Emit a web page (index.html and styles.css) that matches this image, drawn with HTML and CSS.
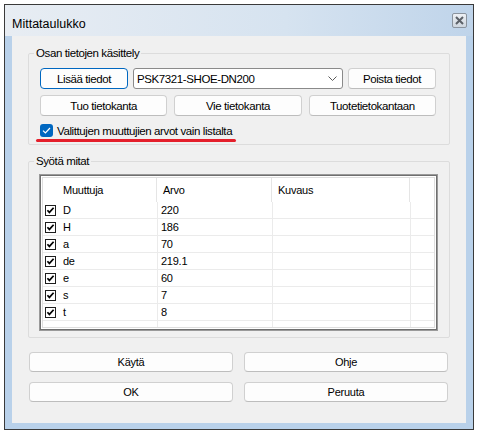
FILE: index.html
```html
<!DOCTYPE html>
<html lang="fi">
<head>
    <meta charset="UTF-8">
    <title>Mittataulukko</title>
    <link rel="stylesheet" href="styles.css">
</head>
<body>
    <div class="window">
        <div class="titlebar">
            <span class="title">Mittataulukko</span>
            <button class="close" aria-label="Sulje">
                <svg width="9" height="9" viewBox="0 0 9 9"><path d="M1 1 L8 8 M8 1 L1 8" stroke="#5c6168" stroke-width="2" fill="none"/></svg>
            </button>
        </div>
        <div class="frame">
            <div class="client">
                <fieldset class="group group-parts">
                    <legend>Osan tietojen käsittely</legend>
                    <div class="row-main">
                        <button class="btn btn-default">Lisää tiedot</button>
                        <div class="combo">
                            <span>PSK7321-SHOE-DN200</span>
                            <svg width="9" height="5" viewBox="0 0 9 5"><path d="M0.5 0.5 L4.5 4.5 L8.5 0.5" stroke="#5a5a5a" stroke-width="1" fill="none"/></svg>
                        </div>
                        <button class="btn">Poista tiedot</button>
                    </div>
                    <div class="row-db">
                        <button class="btn">Tuo tietokanta</button>
                        <button class="btn">Vie tietokanta</button>
                        <button class="btn">Tuotetietokantaan</button>
                    </div>
                    <label class="check">
                        <span class="check-box">
                            <svg width="9" height="7" viewBox="0 0 9 7"><path d="M1 3.6 L3.4 6 L8 1" stroke="#fff" stroke-width="1.2" fill="none"/></svg>
                        </span>
                        Valittujen muuttujien arvot vain listalta
                    </label>
                    <div class="mark"></div>
                </fieldset>

                <fieldset class="group group-values">
                    <legend>Syötä mitat</legend>
                    <div class="list">
                        <div class="list-inner">
                            <div class="list-head">
                                <span>Muuttuja</span>
                                <span>Arvo</span>
                                <span>Kuvaus</span>
                                <span></span>
                            </div>
                            <div id="rows"></div>
                        </div>
                    </div>
                </fieldset>

                <div class="actions">
                    <button class="btn btn-small">Käytä</button>
                    <button class="btn btn-small">Ohje</button>
                    <button class="btn btn-small">OK</button>
                    <button class="btn btn-small">Peruuta</button>
                </div>
            </div>
        </div>
    </div>

    <script>
        const values = [
            ['D', '220'],
            ['H', '186'],
            ['a', '70'],
            ['de', '219.1'],
            ['e', '60'],
            ['s', '7'],
            ['t', '8']
        ];

        const tick = '<svg width="11" height="11" viewBox="0 0 11 11">' +
            '<rect x="0.5" y="0.5" width="10" height="10" fill="#fff" stroke="#1e1e1e"/>' +
            '<path d="M2.4 5.2 L4.4 7.4 L8.6 2.8" stroke="#000" stroke-width="1.7" fill="none"/></svg>';

        const rows = document.getElementById('rows');
        values.forEach(([name, value]) => {
            const row = document.createElement('div');
            row.className = 'list-row';
            row.innerHTML = '<div class="var">' + tick + '<span>' + name + '</span></div>' +
                '<div>' + value + '</div><div></div><div></div>';
            rows.appendChild(row);
        });

        // tyhjä rivi listan lopussa
        const empty = document.createElement('div');
        empty.className = 'list-row';
        empty.innerHTML = '<div></div><div></div><div></div><div></div>';
        rows.appendChild(empty);
    </script>
</body>
</html>
```

FILE: styles.css
```css
body {
    margin: 0;
    background-color: #fff;
    font-family: "Liberation Sans", Arial, sans-serif;
    color: #000;
}

.window {
    box-sizing: border-box;
    width: 470px;
    height: 426px;
    margin: 4px 0 0 4px;
    border: 1px solid #3a3a3a;
    background-color: #b9d1ea;
    display: flex;
    flex-direction: column;
    box-shadow: 0 1px 0 #8cc8e6;
}

.titlebar {
    box-sizing: border-box;
    flex: none;
    height: 31px;
    padding: 8px 6px 0 7px;
    display: flex;
    justify-content: space-between;
    align-items: flex-start;
    background: linear-gradient(to right, #e8edf3, #d6e3f0 60%, #bfd4ea);
}

.title {
    margin-top: 4px;
    font-size: 12.5px;
    line-height: 15px;
}

.close {
    box-sizing: border-box;
    width: 15px;
    height: 15px;
    padding: 0;
    border: 1px solid #8b949e;
    border-radius: 2px;
    background: linear-gradient(#edf0f4, #cfd7e0);
    display: flex;
    align-items: center;
    justify-content: center;
}

.frame {
    flex: 1;
    padding: 0 7px 6px;
    display: flex;
}

.client {
    box-sizing: border-box;
    flex: 1;
    padding: 10px 16px 0;
    background-color: #f0f0f0;
}

/* ryhmäkehykset */
.group {
    margin: 0;
    min-width: 0;
    border: 1px solid #dcdcdc;
    border-radius: 2px;
}

.group legend {
    padding: 0 2px;
    font-size: 11.5px;
    line-height: 14px;
    letter-spacing: -0.4px;
}

.group-parts {
    padding: 8px 13px 2px 11px;
}

.group-parts legend {
    margin-left: -6px;
}

.group-values {
    margin-top: 9px;
    padding: 6px 11px 6px 10px;
}

.group-values legend {
    margin-left: -5px;
}

/* painikkeet */
.btn {
    box-sizing: border-box;
    height: 21px;
    padding: 0;
    border: 1px solid #d0d0d0;
    border-bottom-color: #bdbdbd;
    border-radius: 4px;
    background-color: #fdfdfd;
    font-family: inherit;
    font-size: 11.5px;
    letter-spacing: -0.4px;
    color: #000;
}

.btn-default {
    border-color: #0067c0;
}

.btn-small {
    height: 20px;
    font-size: 11px;
    letter-spacing: -0.25px;
}

.row-main {
    display: grid;
    grid-template-columns: 88px 1fr 88px;
    gap: 5px;
    height: 21px;
}

.combo {
    box-sizing: border-box;
    display: flex;
    justify-content: space-between;
    align-items: center;
    padding: 0 5px 0 3px;
    border: 1px solid #8a8a8a;
    border-radius: 3px;
    background-color: #fff;
    font-size: 11.5px;
    letter-spacing: -0.4px;
}

.row-db {
    display: grid;
    grid-template-columns: repeat(3, 1fr);
    gap: 7px;
    height: 21px;
    margin-top: 6px;
}

.check {
    display: flex;
    align-items: center;
    gap: 4px;
    height: 13px;
    margin-top: 8px;
    font-size: 11.5px;
    letter-spacing: -0.4px;
}

.check-box {
    flex: none;
    width: 13px;
    height: 13px;
    border-radius: 3px;
    background-color: #0067c0;
    display: flex;
    align-items: center;
    justify-content: center;
}

.mark {
    width: 200px;
    height: 3px;
    margin: 2px 0 0 -4px;
    border-radius: 2px;
    background-color: #e41f2b;
}

/* mittalista */
.list {
    box-sizing: border-box;
    height: 157px;
    padding: 2px;
    border: 1px solid #9a9a9a;
    box-shadow: inset 0 0 0 1px #6f6f6f;
    background-color: #fff;
}

.list-inner {
    box-sizing: border-box;
    height: 100%;
    border: 1px solid #dedede;
    overflow: hidden;
    font-size: 11px;
    letter-spacing: -0.25px;
}

.list-head,
.list-row {
    display: grid;
    grid-template-columns: 114px 115px 138px 1fr;
}

.list-head {
    height: 24px;
}

.list-head span {
    padding-left: 6px;
    line-height: 24px;
    border-right: 1px solid #e5e5e5;
}

.list-head span:first-child {
    padding-left: 20px;
}

.list-head span:last-child {
    border-right: none;
}

.list-row {
    box-sizing: border-box;
    height: 17px;
    border-bottom: 1px solid #ebebeb;
}

.list-row > div {
    display: flex;
    align-items: center;
}

.list-row > div + div {
    padding-left: 3px;
    border-left: 1px solid #ebebeb;
}

.list-row .var {
    gap: 7px;
    padding-left: 2px;
}

.actions {
    display: grid;
    grid-template-columns: 1fr 1fr;
    gap: 10px 11px;
    margin: 14px 2px 0 1px;
}
```
